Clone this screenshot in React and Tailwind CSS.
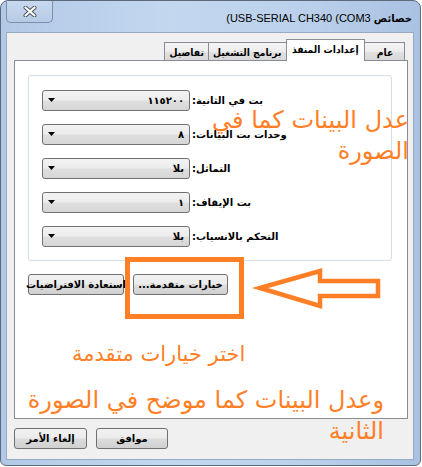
import React from "react";

const rows = [
  { label: "بت في الثانية:", value: "١١٥٢٠٠" },
  { label: "وحدات بت البيانات:", value: "٨" },
  { label: "التماثل:", value: "بلا" },
  { label: "بت الإيقاف:", value: "١" },
  { label: "التحكم بالانسياب:", value: "بلا" },
];

const uiText = "whitespace-nowrap text-[10px] leading-none font-bold text-black font-['DejaVu_Sans',sans-serif]";

function Combo({ value }) {
  return (
    <div className="relative w-[148px] h-[21px] shrink-0 rounded-[3px] border border-[#707070] bg-[linear-gradient(180deg,#f3f3f3_0%,#ececec_48%,#dfdfdf_52%,#d6d6d6_100%)] flex items-center justify-between pl-[4px] pr-[5px]">
      <svg width="8" height="5" viewBox="0 0 8 5" className="ml-[1px]">
        <path d="M0 0 H7 L3.5 4 Z" fill="#000" />
      </svg>
      <span dir="rtl" className={uiText}>
        {value}
      </span>
    </div>
  );
}

function Btn({ children, w }) {
  return (
    <div
      className={`${w} h-[21px] shrink-0 rounded-[3px] border border-[#707070] bg-[linear-gradient(180deg,#f2f2f2_0%,#ebebeb_48%,#dddddd_52%,#cfcfcf_100%)] flex items-center justify-center`}
    >
      <span dir="rtl" className={uiText}>
        {children}
      </span>
    </div>
  );
}

function Tab({ children, w, selected }) {
  if (selected) {
    return (
      <div className={`${w} relative z-10 -ml-px mb-[-1px] h-[22px] border border-b-0 border-[#898c95] bg-white flex items-start justify-center pt-[5px]`}>
        <span dir="rtl" className={`${uiText} inline-block scale-x-[0.92]`}>{children}</span>
      </div>
    );
  }
  return (
    <div className={`${w} -ml-px h-[18px] border border-b-0 border-[#898c95] bg-[linear-gradient(180deg,#f4f4f4_0%,#ededed_50%,#e2e2e2_51%,#d8d8d8_100%)] flex items-center justify-center pt-[2px]`}>
      <span dir="rtl" className={`${uiText} inline-block scale-x-[0.92]`}>{children}</span>
    </div>
  );
}

export default function App() {
  return (
    <div className="relative w-[422px] h-[467px] overflow-hidden bg-white">
      {/* window */}
      <div className="relative w-[421px] h-[466px] rounded-t-[8px] rounded-b-[6px] border border-[#5d6a7b] bg-[linear-gradient(90deg,#b2c9e6_0%,#c3d7ef_40%,#bcd1eb_70%,#a9c2e2_100%)] flex flex-col">
        {/* title bar */}
        <div className="relative h-[31px] shrink-0 flex items-center justify-end pr-[8px] pt-[3px]">
          <div className="absolute left-[5px] top-0 w-[47px] h-[22px] rounded-b-[5px] border border-t-0 border-[#7d8fa9] bg-[linear-gradient(180deg,#c8d9ee_0%,#b6cbe6_100%)] flex items-center justify-center">
            <svg width="14" height="11" viewBox="0 0 14 11">
              <path d="M2.5 1.5 L11.5 9.5 M11.5 1.5 L2.5 9.5" stroke="#4a4f57" strokeWidth="4" strokeLinecap="round" />
              <path d="M2.5 1.5 L11.5 9.5 M11.5 1.5 L2.5 9.5" stroke="#ffffff" strokeWidth="2.2" strokeLinecap="round" />
            </svg>
          </div>
          <span className="whitespace-nowrap text-[11px] leading-none text-black font-['Liberation_Sans','DejaVu_Sans',sans-serif]">
            (USB-SERIAL CH340 (COM3 <span className="font-['DejaVu_Sans',sans-serif] font-bold text-[10px]">خصائص</span>
          </span>
        </div>

        {/* client area */}
        <div className="ml-[5px] mr-[6px] mb-[5px] flex-1 border border-[#98abc4] bg-[#f0f0f0] pl-[7px] pr-[5px] pt-[6px] flex flex-col">
          {/* tabs */}
          <div className="flex items-end justify-end pr-[3px] h-[21px]">
            <Tab w="w-[45px]">تفاصيل</Tab>
            <Tab w="w-[79px]">برنامج التشغيل</Tab>
            <Tab w="w-[79px]" selected>إعدادات المنفذ</Tab>
            <Tab w="w-[41px]">عام</Tab>
          </div>
          {/* panel */}
          <div className="h-[359px] border border-[#898c95] bg-white pl-[13px] pt-[14px]">
            <div className="w-[364px] h-[186px] rounded-[3px] border border-[#d5dfe5] pl-[13px] pt-[14px] flex flex-col gap-[13px]">
              {rows.map((r) => (
                <div key={r.label} className="flex items-center">
                  <Combo value={r.value} />
                  <span dir="rtl" className={`ml-[2px] ${uiText}`}>
                    {r.label}
                  </span>
                </div>
              ))}
            </div>
            <div className="mt-[13px] flex gap-[9px]">
              <Btn w="w-[96px]">استعادة الافتراضيات</Btn>
              <Btn w="w-[95px]">خيارات متقدمة...</Btn>
            </div>
          </div>
          {/* bottom buttons */}
          <div className="mt-[9px] flex gap-[9px]">
            <Btn w="w-[73px]">إلغاء الأمر</Btn>
            <Btn w="w-[72px]">موافق</Btn>
          </div>
        </div>
      </div>

      {/* annotations */}
      <div dir="rtl" className="absolute right-[13px] top-[105px] whitespace-nowrap text-right text-[24px] leading-[31px] text-[#ff7f27] font-['DejaVu_Sans',sans-serif]">
        <div>عدل البينات كما في</div>
        <div>الصورة</div>
      </div>

      <div className="absolute left-[125px] top-[257px] w-[119px] h-[62px] border-[5px] border-[#ff7f27]" />

      <svg className="absolute left-0 top-0" width="422" height="467" viewBox="0 0 422 467">
        <path
          d="M260 288 L320 271 L320 281 L378 281 L378 296 L320 296 L320 306 Z"
          fill="none"
          stroke="#ff7f27"
          strokeWidth="4.5"
          strokeLinejoin="miter"
        />
      </svg>

      <div dir="rtl" className="absolute left-[72px] top-[339px] whitespace-nowrap text-[21px] leading-[31px] text-[#ff7f27] font-['DejaVu_Sans',sans-serif]">
        اختر خيارات متقدمة
      </div>

      <div dir="rtl" className="absolute right-[38px] top-[385px] whitespace-nowrap text-right text-[24px] leading-[31px] text-[#ff7f27] font-['DejaVu_Sans',sans-serif]">
        <div>وعدل البينات كما موضح في الصورة</div>
        <div>الثانية</div>
      </div>
    </div>
  );
}
